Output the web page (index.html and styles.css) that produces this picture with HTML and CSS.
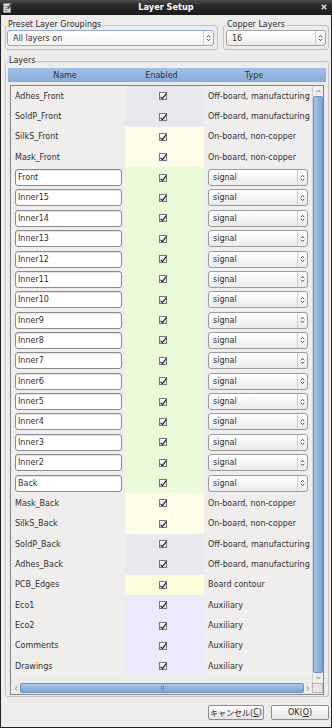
FILE: index.html
```html
<!DOCTYPE html>
<html lang="en">
  <head>
    <meta charset="UTF-8">
    <meta name="viewport" content="width=device-width, initial-scale=1">
    <title>Layer Setup</title>
    <link rel="stylesheet" href="styles.css">
  </head>
  <body>
    <div class="window">
      <div class="titlebar">
        <div class="tb-side tb-left">
          <svg width="10" height="11" viewBox="0 0 10 11"><rect x="0.5" y="1.5" width="7" height="9" fill="#d6d6d6" stroke="#8e8e8e"/><path d="M2 4.5h3.5M2 6.5h3.5M2 8.5h3" stroke="#7a7a7a" stroke-width="0.8"/><path d="M5 6.5L9 1" stroke="#4a4a4a" stroke-width="1.7"/></svg>
        </div>
        <div class="title">Layer Setup</div>
        <div class="tb-side tb-right">
          <svg width="6" height="6" viewBox="0 0 6 6"><path d="M0.7 0.7L5.3 5.3M5.3 0.7L0.7 5.3" stroke="#d9d9d9" stroke-width="1.5"/></svg>
        </div>
      </div>

      <div class="client">
        <div class="presets">
          <fieldset class="group group-preset">
            <legend>Preset Layer Groupings</legend>
            <div class="combo combo-focus">
              <span class="combo-text">All layers on</span>
              <span class="combo-arrow"><svg width="5" height="8" viewBox="0 0 5 8"><path d="M0.8 3.2L2.5 1.3L4.2 3.2M0.8 4.8L2.5 6.7L4.2 4.8" fill="none" stroke="#444" stroke-width="0.9"/></svg></span>
            </div>
          </fieldset>
          <fieldset class="group group-copper">
            <legend>Copper Layers</legend>
            <div class="combo">
              <span class="combo-text">16</span>
              <span class="combo-arrow"><svg width="5" height="8" viewBox="0 0 5 8"><path d="M0.8 3.2L2.5 1.3L4.2 3.2M0.8 4.8L2.5 6.7L4.2 4.8" fill="none" stroke="#444" stroke-width="0.9"/></svg></span>
            </div>
          </fieldset>
        </div>

        <fieldset class="group group-layers">
          <legend>Layers</legend>
          <div class="head">
            <div>Name</div>
            <div>Enabled</div>
            <div>Type</div>
          </div>
          <div class="frame">
            <div class="viewport">
              <div class="row r-off"><div class="name">Adhes_Front</div><div class="en"><span class="check"></span></div><div class="type">Off-board, manufacturing</div></div>
              <div class="row r-off"><div class="name">SoldP_Front</div><div class="en"><span class="check"></span></div><div class="type">Off-board, manufacturing</div></div>
              <div class="row r-nc"><div class="name">SilkS_Front</div><div class="en"><span class="check"></span></div><div class="type">On-board, non-copper</div></div>
              <div class="row r-nc"><div class="name">Mask_Front</div><div class="en"><span class="check"></span></div><div class="type">On-board, non-copper</div></div>

              <div class="row r-cu"><div class="name"><span class="field">Front</span></div><div class="en"><span class="check"></span></div><div class="type"><span class="combo combo-type"><span class="combo-text">signal</span><span class="combo-arrow"><svg width="5" height="8" viewBox="0 0 5 8"><path d="M0.8 3.2L2.5 1.3L4.2 3.2M0.8 4.8L2.5 6.7L4.2 4.8" fill="none" stroke="#444" stroke-width="0.9"/></svg></span></span></div></div>
              <div class="row r-cu"><div class="name"><span class="field">Inner15</span></div><div class="en"><span class="check"></span></div><div class="type"><span class="combo combo-type"><span class="combo-text">signal</span><span class="combo-arrow"><svg width="5" height="8" viewBox="0 0 5 8"><path d="M0.8 3.2L2.5 1.3L4.2 3.2M0.8 4.8L2.5 6.7L4.2 4.8" fill="none" stroke="#444" stroke-width="0.9"/></svg></span></span></div></div>
              <div class="row r-cu"><div class="name"><span class="field">Inner14</span></div><div class="en"><span class="check"></span></div><div class="type"><span class="combo combo-type"><span class="combo-text">signal</span><span class="combo-arrow"><svg width="5" height="8" viewBox="0 0 5 8"><path d="M0.8 3.2L2.5 1.3L4.2 3.2M0.8 4.8L2.5 6.7L4.2 4.8" fill="none" stroke="#444" stroke-width="0.9"/></svg></span></span></div></div>
              <div class="row r-cu"><div class="name"><span class="field">Inner13</span></div><div class="en"><span class="check"></span></div><div class="type"><span class="combo combo-type"><span class="combo-text">signal</span><span class="combo-arrow"><svg width="5" height="8" viewBox="0 0 5 8"><path d="M0.8 3.2L2.5 1.3L4.2 3.2M0.8 4.8L2.5 6.7L4.2 4.8" fill="none" stroke="#444" stroke-width="0.9"/></svg></span></span></div></div>
              <div class="row r-cu"><div class="name"><span class="field">Inner12</span></div><div class="en"><span class="check"></span></div><div class="type"><span class="combo combo-type"><span class="combo-text">signal</span><span class="combo-arrow"><svg width="5" height="8" viewBox="0 0 5 8"><path d="M0.8 3.2L2.5 1.3L4.2 3.2M0.8 4.8L2.5 6.7L4.2 4.8" fill="none" stroke="#444" stroke-width="0.9"/></svg></span></span></div></div>
              <div class="row r-cu"><div class="name"><span class="field">Inner11</span></div><div class="en"><span class="check"></span></div><div class="type"><span class="combo combo-type"><span class="combo-text">signal</span><span class="combo-arrow"><svg width="5" height="8" viewBox="0 0 5 8"><path d="M0.8 3.2L2.5 1.3L4.2 3.2M0.8 4.8L2.5 6.7L4.2 4.8" fill="none" stroke="#444" stroke-width="0.9"/></svg></span></span></div></div>
              <div class="row r-cu"><div class="name"><span class="field">Inner10</span></div><div class="en"><span class="check"></span></div><div class="type"><span class="combo combo-type"><span class="combo-text">signal</span><span class="combo-arrow"><svg width="5" height="8" viewBox="0 0 5 8"><path d="M0.8 3.2L2.5 1.3L4.2 3.2M0.8 4.8L2.5 6.7L4.2 4.8" fill="none" stroke="#444" stroke-width="0.9"/></svg></span></span></div></div>
              <div class="row r-cu"><div class="name"><span class="field">Inner9</span></div><div class="en"><span class="check"></span></div><div class="type"><span class="combo combo-type"><span class="combo-text">signal</span><span class="combo-arrow"><svg width="5" height="8" viewBox="0 0 5 8"><path d="M0.8 3.2L2.5 1.3L4.2 3.2M0.8 4.8L2.5 6.7L4.2 4.8" fill="none" stroke="#444" stroke-width="0.9"/></svg></span></span></div></div>
              <div class="row r-cu"><div class="name"><span class="field">Inner8</span></div><div class="en"><span class="check"></span></div><div class="type"><span class="combo combo-type"><span class="combo-text">signal</span><span class="combo-arrow"><svg width="5" height="8" viewBox="0 0 5 8"><path d="M0.8 3.2L2.5 1.3L4.2 3.2M0.8 4.8L2.5 6.7L4.2 4.8" fill="none" stroke="#444" stroke-width="0.9"/></svg></span></span></div></div>
              <div class="row r-cu"><div class="name"><span class="field">Inner7</span></div><div class="en"><span class="check"></span></div><div class="type"><span class="combo combo-type"><span class="combo-text">signal</span><span class="combo-arrow"><svg width="5" height="8" viewBox="0 0 5 8"><path d="M0.8 3.2L2.5 1.3L4.2 3.2M0.8 4.8L2.5 6.7L4.2 4.8" fill="none" stroke="#444" stroke-width="0.9"/></svg></span></span></div></div>
              <div class="row r-cu"><div class="name"><span class="field">Inner6</span></div><div class="en"><span class="check"></span></div><div class="type"><span class="combo combo-type"><span class="combo-text">signal</span><span class="combo-arrow"><svg width="5" height="8" viewBox="0 0 5 8"><path d="M0.8 3.2L2.5 1.3L4.2 3.2M0.8 4.8L2.5 6.7L4.2 4.8" fill="none" stroke="#444" stroke-width="0.9"/></svg></span></span></div></div>
              <div class="row r-cu"><div class="name"><span class="field">Inner5</span></div><div class="en"><span class="check"></span></div><div class="type"><span class="combo combo-type"><span class="combo-text">signal</span><span class="combo-arrow"><svg width="5" height="8" viewBox="0 0 5 8"><path d="M0.8 3.2L2.5 1.3L4.2 3.2M0.8 4.8L2.5 6.7L4.2 4.8" fill="none" stroke="#444" stroke-width="0.9"/></svg></span></span></div></div>
              <div class="row r-cu"><div class="name"><span class="field">Inner4</span></div><div class="en"><span class="check"></span></div><div class="type"><span class="combo combo-type"><span class="combo-text">signal</span><span class="combo-arrow"><svg width="5" height="8" viewBox="0 0 5 8"><path d="M0.8 3.2L2.5 1.3L4.2 3.2M0.8 4.8L2.5 6.7L4.2 4.8" fill="none" stroke="#444" stroke-width="0.9"/></svg></span></span></div></div>
              <div class="row r-cu"><div class="name"><span class="field">Inner3</span></div><div class="en"><span class="check"></span></div><div class="type"><span class="combo combo-type"><span class="combo-text">signal</span><span class="combo-arrow"><svg width="5" height="8" viewBox="0 0 5 8"><path d="M0.8 3.2L2.5 1.3L4.2 3.2M0.8 4.8L2.5 6.7L4.2 4.8" fill="none" stroke="#444" stroke-width="0.9"/></svg></span></span></div></div>
              <div class="row r-cu"><div class="name"><span class="field">Inner2</span></div><div class="en"><span class="check"></span></div><div class="type"><span class="combo combo-type"><span class="combo-text">signal</span><span class="combo-arrow"><svg width="5" height="8" viewBox="0 0 5 8"><path d="M0.8 3.2L2.5 1.3L4.2 3.2M0.8 4.8L2.5 6.7L4.2 4.8" fill="none" stroke="#444" stroke-width="0.9"/></svg></span></span></div></div>
              <div class="row r-cu"><div class="name"><span class="field">Back</span></div><div class="en"><span class="check"></span></div><div class="type"><span class="combo combo-type"><span class="combo-text">signal</span><span class="combo-arrow"><svg width="5" height="8" viewBox="0 0 5 8"><path d="M0.8 3.2L2.5 1.3L4.2 3.2M0.8 4.8L2.5 6.7L4.2 4.8" fill="none" stroke="#444" stroke-width="0.9"/></svg></span></span></div></div>

              <div class="row r-nc"><div class="name">Mask_Back</div><div class="en"><span class="check"></span></div><div class="type">On-board, non-copper</div></div>
              <div class="row r-nc"><div class="name">SilkS_Back</div><div class="en"><span class="check"></span></div><div class="type">On-board, non-copper</div></div>
              <div class="row r-off"><div class="name">SoldP_Back</div><div class="en"><span class="check"></span></div><div class="type">Off-board, manufacturing</div></div>
              <div class="row r-off"><div class="name">Adhes_Back</div><div class="en"><span class="check"></span></div><div class="type">Off-board, manufacturing</div></div>
              <div class="row r-edge"><div class="name">PCB_Edges</div><div class="en"><span class="check"></span></div><div class="type">Board contour</div></div>
              <div class="row r-aux"><div class="name">Eco1</div><div class="en"><span class="check"></span></div><div class="type">Auxiliary</div></div>
              <div class="row r-aux"><div class="name">Eco2</div><div class="en"><span class="check"></span></div><div class="type">Auxiliary</div></div>
              <div class="row r-aux"><div class="name">Comments</div><div class="en"><span class="check"></span></div><div class="type">Auxiliary</div></div>
              <div class="row r-aux"><div class="name">Drawings</div><div class="en"><span class="check"></span></div><div class="type">Auxiliary</div></div>
            </div>

            <div class="vscroll">
              <div class="sb-btn"><svg width="5" height="4" viewBox="0 0 5 4"><path d="M0.5 3.3L2.5 1L4.5 3.3" fill="none" stroke="#8a8a8a"/></svg></div>
              <div class="sb-thumb"></div>
              <div class="sb-btn"><svg width="5" height="4" viewBox="0 0 5 4"><path d="M0.5 0.7L2.5 3L4.5 0.7" fill="none" stroke="#8a8a8a"/></svg></div>
            </div>
            <div class="hscroll">
              <div class="sb-btn sb-left"><svg width="4" height="5" viewBox="0 0 4 5"><path d="M3.3 0.5L1 2.5L3.3 4.5" fill="none" stroke="#8a8a8a"/></svg></div>
              <div class="sb-thumb"><span class="grip"></span></div>
              <div class="sb-btn sb-right"><svg width="4" height="5" viewBox="0 0 4 5"><path d="M0.7 0.5L3 2.5L0.7 4.5" fill="none" stroke="#8a8a8a"/></svg></div>
            </div>
            <div class="corner"></div>
          </div>
        </fieldset>

        <div class="buttons">
          <div class="btn btn-cancel">キャンセル(<u>C</u>)</div>
          <div class="btn btn-ok">OK(<u>O</u>)</div>
        </div>
      </div>
    </div>
  </body>
</html>
```

FILE: styles.css
```css
* {
  box-sizing: border-box;
}
body {
  margin: 0;
  background-color: #edeceb;
  font-family: "DejaVu Sans", "Noto Sans CJK JP", sans-serif;
  font-size: 8px;
  color: #303030;
}

.window {
  width: 332px;
  height: 728px;
  display: flex;
  flex-direction: column;
}

/* title bar */
.titlebar {
  height: 15px;
  display: flex;
  align-items: center;
  background: linear-gradient(#4e4e4e, #2a2a2a 35%, #1b1b1b);
}
.tb-side {
  width: 14px;
  height: 15px;
  display: flex;
  align-items: center;
}
.tb-left { padding-left: 3px; }
.tb-right { padding-left: 3px; padding-bottom: 1px; }
.title {
  flex: 1;
  text-align: center;
  color: #ffffff;
  font-weight: bold;
  font-size: 8.2px;
  line-height: 15px;
}

.client {
  flex: 1;
  display: flex;
  flex-direction: column;
  border: 1px solid #222222;
  border-top: 0;
  padding: 5px 2px 7px 4px;
}

/* group boxes */
.group {
  margin: 0;
  min-width: 0;
  border: 1px solid #c4c3c1;
  border-radius: 3px;
}
.group legend {
  padding: 0 1px;
  line-height: 10px;
  color: #2a2a2a;
}
.presets {
  display: flex;
  gap: 5px;
}
.group-preset {
  width: 213px;
  padding: 0 3px 3px 1px;
}
.group-copper {
  width: 106px;
  padding: 0 2px 3px 2px;
}
.group-layers {
  margin-top: 6px;
  padding: 2px 2px 1px 2px;
}

/* combo boxes */
.combo {
  display: flex;
  align-items: center;
  height: 16px;
  border: 1px solid #a2a2a2;
  border-radius: 3px;
  background: linear-gradient(#ffffff, #ebebea);
  padding-left: 5px;
}
.combo-focus {
  border-color: #8eaad2;
  background: linear-gradient(#ffffff, #f2f2f1);
}
.combo-text {
  flex: 1;
  white-space: nowrap;
}
.combo-arrow {
  width: 10px;
  height: 100%;
  display: flex;
  align-items: center;
  justify-content: center;
  border-left: 1px solid #cfcfcf;
}
.combo-type {
  width: 100px;
  height: 17px;
  padding-left: 4px;
  border-color: #9c9c9c;
}

/* table header */
.head {
  display: grid;
  grid-template-columns: 114px 79px 106px 1fr;
  align-items: center;
  height: 14px;
  text-align: center;
  color: #333333;
  background: linear-gradient(#a3c0e6, #86abdb);
}

/* table frame with scroll bars */
.frame {
  margin: 3px 2px 0 2px;
  height: 610px;
  border: 1px solid #848484;
  padding-bottom: 1px;
  display: grid;
  grid-template-columns: 301px 11px;
  grid-template-rows: 597px 10px;
}
.viewport {
  overflow: hidden;
  display: grid;
  grid-auto-rows: 20.36px;
  align-content: start;
}
.row {
  display: grid;
  grid-template-columns: 114px 79px 108px;
}
.row > div {
  display: flex;
  align-items: center;
  white-space: nowrap;
}
.name {
  padding-left: 4px;
  background-color: #efeeec;
}
.en {
  padding-left: 34px;
}
.type {
  padding-left: 4px;
  background-color: #efeeec;
}
.r-off .en { background-color: #e9e8ee; }
.r-nc .en { background-color: #fdfdea; }
.r-cu .en { background-color: #e9fbd9; }
.r-edge .en { background-color: #fdfcd8; }
.r-aux .en { background-color: #ebe9fc; }

.field {
  display: flex;
  align-items: center;
  width: 107px;
  height: 17px;
  padding-left: 2px;
  border: 1px solid #8c8c8c;
  border-radius: 3px;
  background: #ffffff;
  box-shadow: inset 0 1px 1px #e2e2e2;
}

.check {
  position: relative;
  width: 8px;
  height: 8px;
  border: 1px solid #767676;
  background: linear-gradient(#ffffff, #e2e2e2);
}
.check::after {
  content: "";
  position: absolute;
  left: 2px;
  top: -1px;
  width: 2px;
  height: 6px;
  border: solid #111111;
  border-width: 0 1.3px 1.3px 0;
  transform: rotate(38deg);
}

.vscroll {
  grid-row: 1;
  grid-column: 2;
  display: flex;
  flex-direction: column;
  background-color: #e3e2e0;
  border-left: 1px solid #d2d1cf;
}
.vscroll .sb-btn {
  height: 10px;
}
.sb-btn {
  display: flex;
  align-items: center;
  justify-content: center;
  background-color: #eeedec;
}
.vscroll .sb-thumb {
  flex: 1;
  background: linear-gradient(90deg, #a9c5e9, #7ea4d6);
  border: 1px solid #6b91c5;
  border-radius: 2px;
}
.hscroll {
  grid-row: 2;
  grid-column: 1;
  display: flex;
  background-color: #e3e2e0;
}
.sb-left { width: 9px; }
.sb-right { width: 8px; }
.hscroll .sb-thumb {
  flex: 1;
  display: flex;
  align-items: center;
  justify-content: center;
  background: linear-gradient(#a9c5e9, #7ea4d6);
  border: 1px solid #6b91c5;
  border-radius: 2px;
}
.grip {
  width: 3px;
  height: 4px;
  border-left: 1px solid #5f84b8;
  border-right: 1px solid #5f84b8;
}
.corner {
  grid-row: 2;
  grid-column: 2;
  background-color: #e6e5e3;
  border: 1px solid #b9b8b6;
}

/* dialog buttons */
.buttons {
  display: flex;
  justify-content: flex-end;
  gap: 7px;
  margin-top: 8px;
}
.btn {
  height: 15px;
  display: flex;
  align-items: center;
  justify-content: center;
  border: 1px solid #8e8e8e;
  border-radius: 2px;
  background: linear-gradient(#fcfcfc, #e4e4e3);
  color: #262626;
}
.btn-cancel { width: 56px; }
.btn-ok { width: 58px; }
```
